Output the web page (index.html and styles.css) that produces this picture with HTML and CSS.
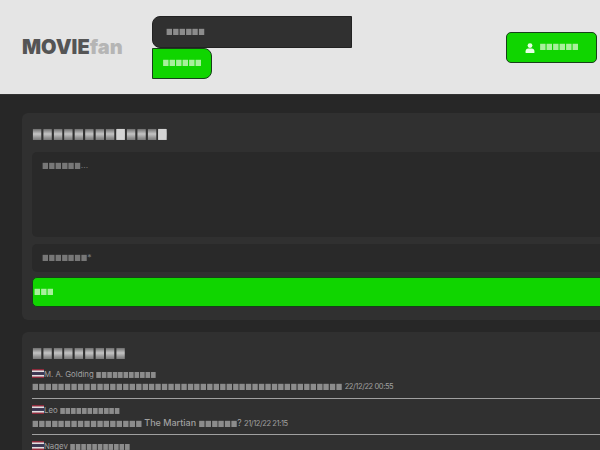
FILE: index.html
```html
<!DOCTYPE html>
<html lang="th">
<head>
<meta charset="utf-8">
<title>MOVIEfan</title>
<link rel="stylesheet" href="styles.css">
</head>
<body>
<header class="header">
  <a class="logo">MOVIE<span class="logo-fan">fan</span></a>
  <form class="search">
    <div class="search-input"><span class="tofu tofu-mid">■■■■■■</span></div>
    <div class="search-btn"><span class="tofu tofu-light">■■■■■■</span></div>
  </form>
  <a class="login">
    <svg class="user-icon" viewBox="0 0 10 10" width="10" height="10"><circle cx="5" cy="2.6" r="2.4"/><path d="M0.6 10V8.2C0.6 6.6 1.8 5.6 3.2 5.6H6.8C8.2 5.6 9.4 6.6 9.4 8.2V10Z"/></svg>
    <span class="tofu tofu-light">■■■■■■</span>
  </a>
</header>
<main class="main">
  <section class="card">
    <h2 class="card-title"><span class="tofu-big">■■■■■■■■<span class="bright">■</span>■■■<span class="bright">■</span></span></h2>
    <div class="field field-area"><span class="tofu tofu-dim">■■■■■■</span><span class="hint">...</span></div>
    <div class="field field-line"><span class="tofu tofu-dim">■■■■■■■</span><span class="hint">*</span></div>
    <div class="submit"><span class="tofu tofu-light">■■■</span></div>
  </section>
  <section class="card card-list">
    <h2 class="card-title"><span class="tofu-big">■■■■■■■■■</span></h2>
    <article class="comment">
      <div class="comment-head"><svg class="flag" viewBox="0 0 12 8" width="12" height="9" preserveAspectRatio="none"><rect width="12" height="8" fill="#8f2a3c"/><rect y="1.3" width="12" height="5.4" fill="#e0dee0"/><rect y="2.7" width="12" height="2.6" fill="#3a3550"/></svg><span class="name">M. A. Golding</span><span class="tofu tofu-mid tofu-small">■■■■■■■■■■■</span></div>
      <p class="comment-body"><span class="tofu tofu-mid">■■■■■■■■■■■■■■■■■■■■■■■■■■■■■■■■■■■■■■■■■■■■■■■■</span> <span class="date">22/12/22 00:55</span></p>
    </article>
    <article class="comment">
      <div class="comment-head"><svg class="flag" viewBox="0 0 12 8" width="12" height="9" preserveAspectRatio="none"><rect width="12" height="8" fill="#8f2a3c"/><rect y="1.3" width="12" height="5.4" fill="#e0dee0"/><rect y="2.7" width="12" height="2.6" fill="#3a3550"/></svg><span class="name">Leo</span><span class="tofu tofu-mid tofu-small">■■■■■■■■■■■</span></div>
      <p class="comment-body"><span class="tofu tofu-mid">■■■■■■■■■■■■■■■■■</span> <span class="movie">The Martian</span> <span class="tofu tofu-mid">■■■■■■</span>? <span class="date">21/12/22 21:15</span></p>
    </article>
    <article class="comment">
      <div class="comment-head"><svg class="flag" viewBox="0 0 12 8" width="12" height="9" preserveAspectRatio="none"><rect width="12" height="8" fill="#8f2a3c"/><rect y="1.3" width="12" height="5.4" fill="#e0dee0"/><rect y="2.7" width="12" height="2.6" fill="#3a3550"/></svg><span class="name">Nagev</span><span class="tofu tofu-mid tofu-small">■■■■■■■■■■■</span></div>
    </article>
  </section>
</main>
</body>
</html>
```
FILE: styles.css
```css
* { box-sizing: border-box; }
html, body { margin: 0; height: 450px; overflow: hidden; }
body { width: 600px; background: #272727; font-family: Inter, "Liberation Sans", sans-serif; color: #a0a0a0; font-size: 8.5px; }

.header { display: flex; align-items: flex-start; height: 95px; background: #e5e5e5; border-bottom: 1px solid #333; padding: 16px 3px 0 22px; }
.logo { width: 130px; margin-top: 19px; font-family: Inter, sans-serif; font-weight: 900; font-size: 20px; line-height: 24px; color: #555; }
.logo-fan { color: #b5b5b5; }
.search { width: 200px; display: flex; flex-direction: column; align-items: flex-start; }
.search-input { width: 200px; height: 32px; background: #303030; border: 1px solid #222; border-radius: 8px 0 0 8px; padding-left: 13px; display: flex; align-items: center; }
.search-btn { width: 60px; height: 31px; background: #10d500; border: 1px solid #18401a; border-radius: 0 8px 8px 0; display: flex; align-items: center; justify-content: center; }
.login { margin-left: auto; margin-top: 16px; width: 91px; height: 31px; background: #10d500; border: 1px solid #18401a; border-radius: 5px; display: flex; align-items: center; justify-content: center; gap: 5px; }
.user-icon { fill: #e8ffe4; }

.tofu { display: inline-block; transform: scaleY(1.15); font-family: "DejaVu Sans", sans-serif; font-size: 7px; line-height: 1; letter-spacing: -0.15px; white-space: nowrap; }
.tofu-mid { color: #8c8c8c; }
.tofu-light { color: #a8f09c; }
.tofu-dim { color: #777; }
.tofu-small { font-size: 6px; letter-spacing: -0.2px; transform: scaleY(1.3); }
.tofu-big { display: inline-block; transform: scaleY(1.3); font-family: "DejaVu Sans", sans-serif; font-size: 11px; font-weight: 400; line-height: 17px; letter-spacing: 0.05px; vertical-align: top; background: linear-gradient(#707070 30%, #c4c4c4 52%, #8a8a8a 72%); -webkit-background-clip: text; background-clip: text; color: transparent; }
.bright { color: #d4d4d4; }

.main { width: 640px; padding: 18px 0 0 22px; display: flex; flex-direction: column; gap: 12px; }
.card { background: #303030; border-radius: 6px; padding: 12px 10px 13px; display: flex; flex-direction: column; }
.card-title { margin: 0 0 7px; height: 20px; line-height: 17px; font-size: 11px; }
.field { background: #292929; border-radius: 5px; padding: 0 10px; }
.field-area { height: 85px; padding-top: 7px; margin-bottom: 7px; line-height: 12px; }
.field-line { height: 28px; margin-bottom: 5px; display: flex; align-items: center; }
.hint { color: #777; }
.submit { height: 30px; background: #10d500; border: 1px solid #18401a; border-radius: 5px 0 0 5px; display: flex; align-items: center; padding-left: 1px; }

.card-list { padding-top: 12px; height: 200px; }
.card-list .card-title { margin-bottom: 3px; }
.comment { border-bottom: 1px solid #a0a0a0; height: 32px; }
.comment + .comment { height: 36px; padding-top: 4px; }
.comment-head { display: flex; align-items: center; gap: 2px; height: 13px; }
.flag { flex: none; margin-right: -2px; }
.name { font-size: 7.8px; }
.comment-body { margin: 0; height: 13px; line-height: 13px; white-space: nowrap; font-size: 8.5px; }
.movie { font-size: 9px; font-weight: 500; }
.date { font-size: 7.5px; letter-spacing: -0.4px; }
```
